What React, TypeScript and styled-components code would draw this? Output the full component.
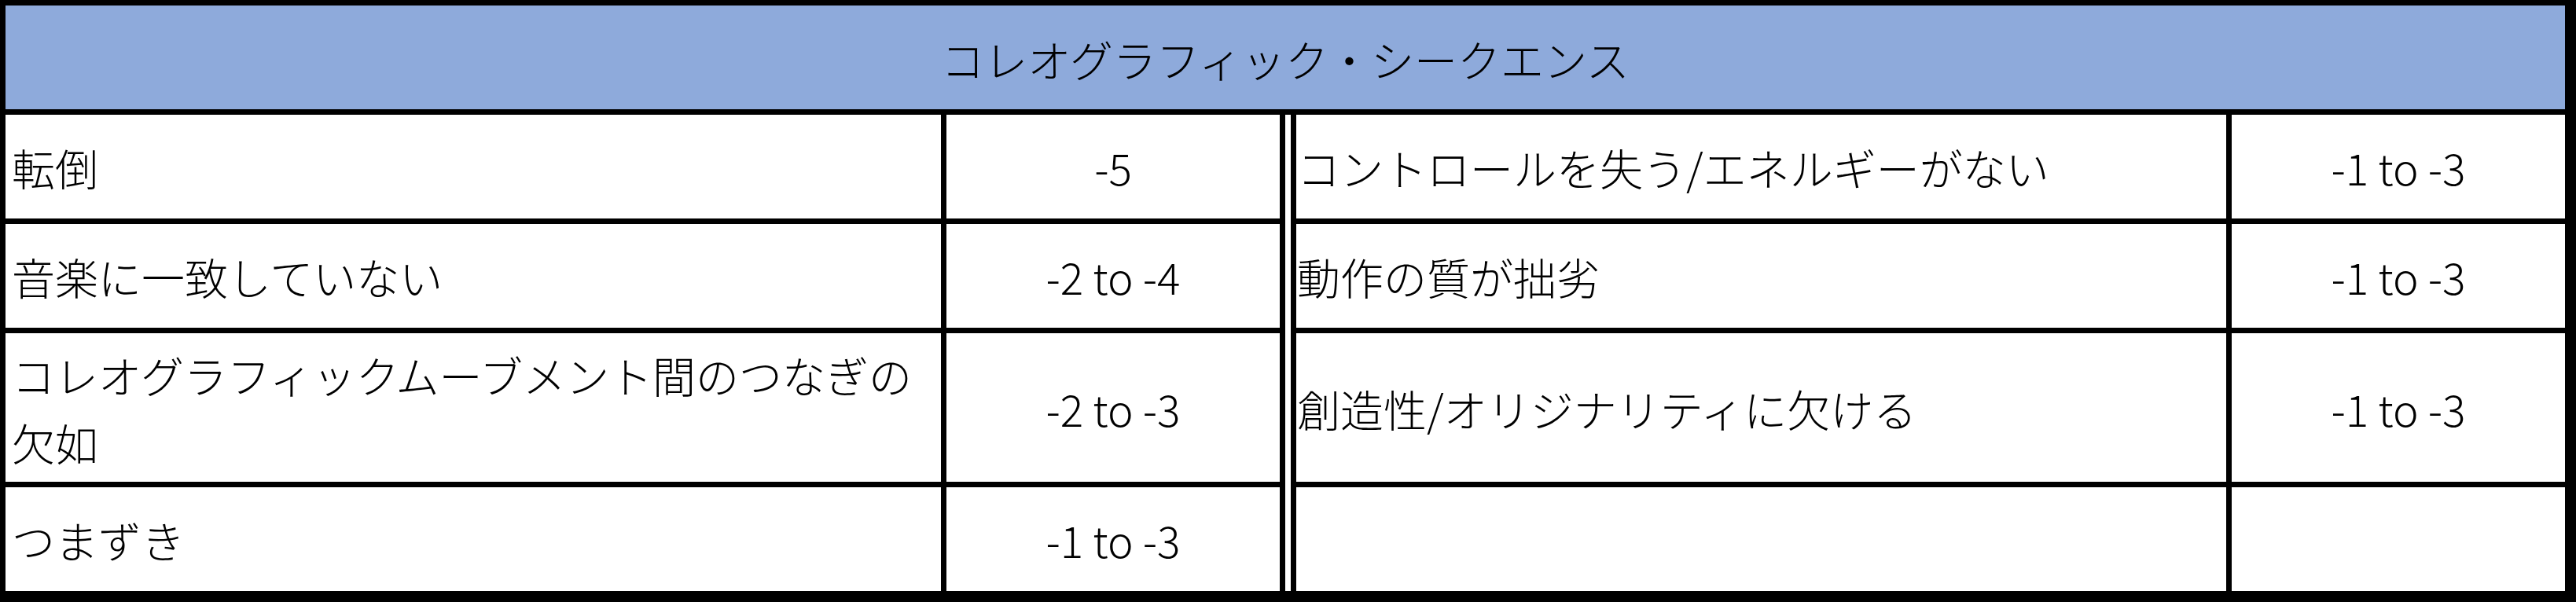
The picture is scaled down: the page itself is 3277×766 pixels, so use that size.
import React from "react";
import styled, { createGlobalStyle } from "styled-components";

const GlobalStyle = createGlobalStyle`
  html, body { margin: 0; padding: 0; background: #fff; }
  * { box-sizing: border-box; }
`;

const Table = styled.div`
  width: 3277px;
  height: 766px;
  background: #000;
  padding: 7px 14px 14px 7px;
  display: grid;
  grid-template-columns: 1190px 424px 7px 1183px 424px;
  grid-template-rows: 132px 132px 132px 189px 132px;
  column-gap: 7px;
  row-gap: 7px;
  font-family: "Noto Sans CJK JP", "Noto Sans", sans-serif;
  font-weight: 300;
  font-size: 55px;
  color: #000;
`;

const Header = styled.div`
  grid-column: 1 / -1;
  grid-row: 1;
  background: #8eaadb;
  display: flex;
  align-items: center;
  justify-content: center;
  padding-top: 2px;
`;

const Spacer = styled.div`
  grid-column: 3;
  grid-row: 2 / 6;
  background: #fff;
`;

const Cell = styled.div`
  background: #fff;
  display: flex;
  align-items: center;
  line-height: 86px;
  overflow: hidden;
`;

const LabelCell = styled(Cell)<{ $inner?: boolean }>`
  justify-content: flex-start;
  padding-left: ${(p) => (p.$inner ? 1 : 8)}px;
`;

const ScoreCell = styled(Cell)`
  justify-content: center;
`;

const rows: [string, string, string, string][] = [
  ["転倒", "-5", "コントロールを失う/エネルギーがない", "-1 to -3"],
  ["音楽に一致していない", "-2 to -4", "動作の質が拙劣", "-1 to -3"],
  ["コレオグラフィックムーブメント間のつなぎの欠如", "-2 to -3", "創造性/オリジナリティに欠ける", "-1 to -3"],
  ["つまずき", "-1 to -3", "", ""],
];

export default function App() {
  return (
    <>
      <GlobalStyle />
      <Table>
        <Header>コレオグラフィック・シークエンス</Header>
        <Spacer />
        {rows.map((r, i) => (
          <React.Fragment key={i}>
            <LabelCell>{r[0]}</LabelCell>
            <ScoreCell>{r[1]}</ScoreCell>
            <LabelCell $inner>{r[2]}</LabelCell>
            <ScoreCell>{r[3]}</ScoreCell>
          </React.Fragment>
        ))}
      </Table>
    </>
  );
}
